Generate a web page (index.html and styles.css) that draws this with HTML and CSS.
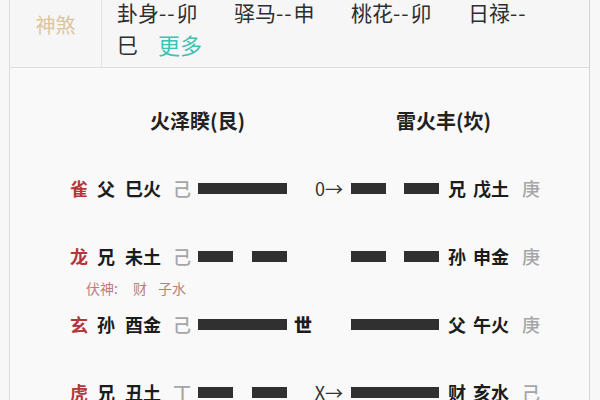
FILE: index.html
```html
<!DOCTYPE html>
<html lang="zh-CN">
<head>
<meta charset="utf-8">
<title>六爻排盘</title>
<link rel="stylesheet" href="styles.css">
</head>
<body>
<div class="board">
  <div class="info-row">
    <div class="info-label">神煞</div>
    <div class="info-text">
      <div class="info-line">
        <span class="item">卦身<span class="dash">--</span>卯</span><span class="item">驿马<span class="dash">--</span>申</span><span class="item">桃花<span class="dash">--</span>卯</span><span class="item">日禄<span class="dash">--</span></span>
      </div>
      <div class="info-line">
        <span class="item-short">巳</span><span class="more">更多</span>
      </div>
    </div>
  </div>

  <div class="gua">
    <div class="gua-head">
      <div class="gua-name">火泽睽(艮)</div>
      <div class="gua-name">雷火丰(坎)</div>
    </div>

    <div class="yao">
      <div class="yao-line">
        <span class="shen">雀</span><span class="qin">父</span><span class="zhi">巳火</span><span class="gan">己</span>
        <span class="bar"><i class="seg full"></i></span>
        <span class="mid"><b class="shi"></b><em class="move">0→</em></span>
        <span class="bar"><i class="seg"></i><i class="seg"></i></span>
        <span class="qin r">兄</span><span class="zhi">戊土</span><span class="gan">庚</span>
      </div>
    </div>

    <div class="yao">
      <div class="yao-line">
        <span class="shen">龙</span><span class="qin">兄</span><span class="zhi">未土</span><span class="gan">己</span>
        <span class="bar"><i class="seg"></i><i class="seg"></i></span>
        <span class="mid"><b class="shi"></b><em class="move"></em></span>
        <span class="bar"><i class="seg"></i><i class="seg"></i></span>
        <span class="qin r">孙</span><span class="zhi">申金</span><span class="gan">庚</span>
      </div>
      <div class="fushen"><span class="fs-label">伏神:</span><span class="fs-qin">财</span><span>子水</span></div>
    </div>

    <div class="yao">
      <div class="yao-line">
        <span class="shen">玄</span><span class="qin">孙</span><span class="zhi">酉金</span><span class="gan">己</span>
        <span class="bar"><i class="seg full"></i></span>
        <span class="mid"><b class="shi">世</b><em class="move"></em></span>
        <span class="bar"><i class="seg full"></i></span>
        <span class="qin r">父</span><span class="zhi">午火</span><span class="gan">庚</span>
      </div>
    </div>

    <div class="yao">
      <div class="yao-line">
        <span class="shen">虎</span><span class="qin">兄</span><span class="zhi">丑土</span><span class="gan">丁</span>
        <span class="bar"><i class="seg"></i><i class="seg"></i></span>
        <span class="mid"><b class="shi"></b><em class="move">X→</em></span>
        <span class="bar"><i class="seg full"></i></span>
        <span class="qin r">财</span><span class="zhi">亥水</span><span class="gan">己</span>
      </div>
    </div>
  </div>
</div>
</body>
</html>
```

FILE: styles.css
```css
* { box-sizing: border-box; }

html, body {
  margin: 0;
  padding: 0;
  background: #f7f7f7;
  overflow: hidden;
}

body {
  font-family: "Noto Sans CJK SC", "Noto Sans", sans-serif;
  color: #222;
}

.board {
  margin: -12px 0 0 9px;
  width: 581px;
  border-left: 1px solid #dcdcdc;
  border-right: 1px solid #d6d6d6;
  background: #f8f8f8;
}

/* top info row */
.info-row {
  display: flex;
  border-bottom: 1px solid #dedede;
  background: #f6f6f6;
}

.info-label {
  width: 92px;
  border-right: 1px solid #e2e2e2;
  display: flex;
  align-items: center;
  justify-content: center;
  padding-bottom: 6px;
  font-size: 20px;
  color: #dcc49c;
}

.info-text {
  padding: 8px 0 7px 15px;
  font-size: 21px;
  color: #2e2e2e;
}

.info-line {
  display: flex;
  height: 32px;
  line-height: 32px;
  white-space: nowrap;
}

.item {
  width: 117px;
}

.dash {
  letter-spacing: 1px;
  margin-right: 1px;
}

.item-short {
  width: 41px;
}

.more {
  color: #3fc2b2;
  font-size: 22px;
}

/* hexagram area */
.gua {
  padding: 38px 0 20px 0;
  background: #f9f9f9;
}

.gua-head {
  display: flex;
  padding-left: 87px;
  height: 30px;
  margin-bottom: 40px;
}

.gua-name {
  width: 201px;
  text-align: center;
  font-size: 20px;
  font-weight: bold;
  line-height: 30px;
  color: #222;
}

.gua-name + .gua-name {
  margin-left: 45px;
}

.yao {
  height: 68px;
}

.yao-line {
  display: grid;
  grid-template-columns: 27px 28px 48px 25px 89px 64px 88px 34px 49px auto;
  align-items: center;
  height: 24px;
  padding-left: 60px;
  font-size: 18px;
  line-height: 24px;
  font-weight: bold;
  white-space: nowrap;
}

.shen {
  color: #b3373a;
}

.qin, .zhi {
  color: #1c1c1c;
}

.qin.r {
  padding-left: 9px;
}

.gan {
  color: #a6a6a6;
  font-weight: 500;
}

.bar {
  display: flex;
  justify-content: space-between;
  align-items: center;
  height: 24px;
}

.seg {
  display: block;
  width: 35px;
  height: 11px;
  background: #303030;
}

.seg.full {
  width: 100%;
}

.mid {
  display: flex;
  justify-content: space-between;
  align-items: center;
  height: 24px;
}

.shi {
  padding-left: 7px;
  color: #1c1c1c;
}

.move {
  font-style: normal;
  font-weight: normal;
  color: #333;
  padding-right: 8px;
}

.fushen {
  display: flex;
  margin-top: 12px;
  padding-left: 76px;
  height: 16px;
  line-height: 16px;
  font-size: 14px;
  color: #c07c7c;
}

.fs-label {
  width: 47px;
}

.fs-qin {
  width: 25px;
}
```
